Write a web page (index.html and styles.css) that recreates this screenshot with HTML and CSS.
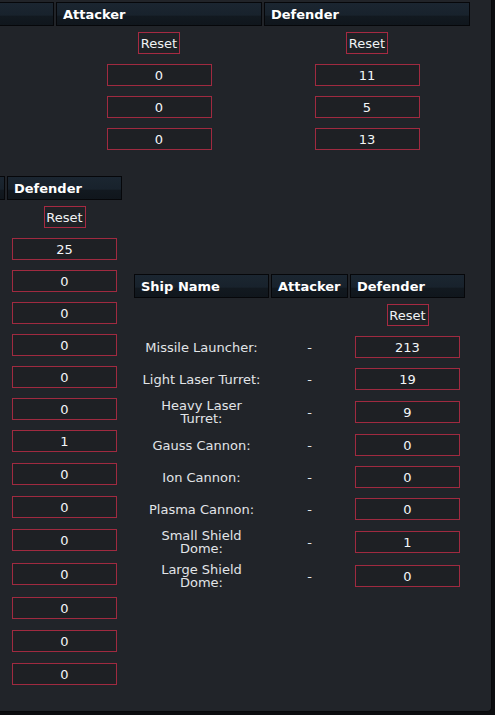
FILE: index.html
```html
<!DOCTYPE html>
<html lang="en">
<head>
<meta charset="utf-8">
<title>Combat Simulator</title>
<link rel="stylesheet" href="styles.css">
</head>
<body>
<div class="panel">
  <div class="tbl t1">
    <div class="row head">
      <div class="c th"></div>
      <div class="c th">Attacker</div>
      <div class="c th">Defender</div>
    </div>
    <div class="row">
      <div class="c"></div>
      <div class="c"><button class="btn">Reset</button></div>
      <div class="c"><button class="btn">Reset</button></div>
    </div>
    <div class="row">
      <div class="c"></div>
      <div class="c"><input class="num" value="0" readonly></div>
      <div class="c"><input class="num" value="11" readonly></div>
    </div>
    <div class="row">
      <div class="c"></div>
      <div class="c"><input class="num" value="0" readonly></div>
      <div class="c"><input class="num" value="5" readonly></div>
    </div>
    <div class="row">
      <div class="c"></div>
      <div class="c"><input class="num" value="0" readonly></div>
      <div class="c"><input class="num" value="13" readonly></div>
    </div>
  </div>

  <div class="sec">
    <div class="tbl t2">
      <div class="row head">
        <div class="c th"></div>
        <div class="c th">Defender</div>
      </div>
      <div class="row"><div class="c"></div><div class="c"><button class="btn">Reset</button></div></div>
      <div class="row"><div class="c"></div><div class="c"><input class="num" value="25" readonly></div></div>
      <div class="row"><div class="c"></div><div class="c"><input class="num" value="0" readonly></div></div>
      <div class="row"><div class="c"></div><div class="c"><input class="num" value="0" readonly></div></div>
      <div class="row"><div class="c"></div><div class="c"><input class="num" value="0" readonly></div></div>
      <div class="row"><div class="c"></div><div class="c"><input class="num" value="0" readonly></div></div>
      <div class="row"><div class="c"></div><div class="c"><input class="num" value="0" readonly></div></div>
      <div class="row"><div class="c"></div><div class="c"><input class="num" value="1" readonly></div></div>
      <div class="row tall"><div class="c"></div><div class="c"><input class="num" value="0" readonly></div></div>
      <div class="row"><div class="c"></div><div class="c"><input class="num" value="0" readonly></div></div>
      <div class="row tall"><div class="c"></div><div class="c"><input class="num" value="0" readonly></div></div>
      <div class="row tall"><div class="c"></div><div class="c"><input class="num" value="0" readonly></div></div>
      <div class="row tall"><div class="c"></div><div class="c"><input class="num" value="0" readonly></div></div>
      <div class="row"><div class="c"></div><div class="c"><input class="num" value="0" readonly></div></div>
      <div class="row tall"><div class="c"></div><div class="c"><input class="num" value="0" readonly></div></div>
    </div>

    <div class="tbl t3">
      <div class="row head">
        <div class="c th">Ship Name</div>
        <div class="c th">Attacker</div>
        <div class="c th">Defender</div>
      </div>
      <div class="row">
        <div class="c"></div>
        <div class="c"></div>
        <div class="c"><button class="btn">Reset</button></div>
      </div>
      <div class="row">
        <div class="c lbl">Missile Launcher:</div>
        <div class="c dash">-</div>
        <div class="c"><input class="num" value="213" readonly></div>
      </div>
      <div class="row">
        <div class="c lbl">Light Laser Turret:</div>
        <div class="c dash">-</div>
        <div class="c"><input class="num" value="19" readonly></div>
      </div>
      <div class="row tall">
        <div class="c lbl">Heavy Laser Turret:</div>
        <div class="c dash">-</div>
        <div class="c"><input class="num" value="9" readonly></div>
      </div>
      <div class="row">
        <div class="c lbl">Gauss Cannon:</div>
        <div class="c dash">-</div>
        <div class="c"><input class="num" value="0" readonly></div>
      </div>
      <div class="row">
        <div class="c lbl">Ion Cannon:</div>
        <div class="c dash">-</div>
        <div class="c"><input class="num" value="0" readonly></div>
      </div>
      <div class="row">
        <div class="c lbl">Plasma Cannon:</div>
        <div class="c dash">-</div>
        <div class="c"><input class="num" value="0" readonly></div>
      </div>
      <div class="row tall">
        <div class="c lbl">Small Shield Dome:</div>
        <div class="c dash">-</div>
        <div class="c"><input class="num" value="1" readonly></div>
      </div>
      <div class="row tall">
        <div class="c lbl">Large Shield Dome:</div>
        <div class="c dash">-</div>
        <div class="c"><input class="num" value="0" readonly></div>
      </div>
    </div>
  </div>
</div>
</body>
</html>
```

FILE: styles.css
```css
html, body {
  margin: 0;
  padding: 0;
}

body {
  background: #0c0d10;
  font-family: "DejaVu Sans", Verdana, sans-serif;
  font-size: 13px;
  color: #e2e5e8;
}

.panel {
  width: 491px;
  height: 711px;
  background: #212429;
  border-right: 1px solid #08090b;
  border-bottom: 1px solid #08090b;
  border-bottom-right-radius: 5px;
  overflow: hidden;
}

.tbl {
  display: flex;
  flex-direction: column;
  gap: 2px;
  padding: 2px;
  width: max-content;
  flex: none;
}

.t1 {
  --cols: 100px 206px 206px;
  margin-left: -48px;
}

.t2 {
  --cols: 100px 115px;
  margin-left: -97px;
}

.t3 {
  --cols: 135px 77px 115px;
}

.sec {
  display: flex;
  align-items: center;
  gap: 8px;
  margin-top: 18px;
}

.row {
  display: grid;
  grid-template-columns: var(--cols);
  column-gap: 2px;
  min-height: 30px;
}

.row.tall {
  min-height: 32px;
}

.row.head {
  min-height: 24px;
  height: 24px;
}

.c {
  display: flex;
  align-items: center;
  justify-content: center;
  text-align: center;
  min-width: 0;
}

.th {
  box-sizing: border-box;
  border: 1px solid #06070a;
  background: linear-gradient(to bottom, #1b2631 0%, #18222c 55%, #121920 60%, #10161c 100%);
  color: #ffffff;
  font-weight: bold;
  justify-content: flex-start;
  padding-left: 6px;
  white-space: nowrap;
}

.btn {
  box-sizing: border-box;
  width: 42px;
  height: 22px;
  margin: 0;
  padding: 0;
  border: 1px solid #a62a42;
  background: #1f2226;
  color: #f0f2f4;
  font-family: "DejaVu Sans", Verdana, sans-serif;
  font-size: 13px;
}

.num {
  box-sizing: border-box;
  width: 105px;
  height: 22px;
  margin: 0;
  padding: 0;
  border: 1px solid #a02a40;
  background: #1e2024;
  color: #f4f6f8;
  text-align: center;
  font-family: "DejaVu Sans", Verdana, sans-serif;
  font-size: 13px;
  outline: none;
}

.lbl {
  padding: 0 5px;
  line-height: 13px;
  color: #e2e5e8;
}

.dash {
  color: #e2e5e8;
}
```
